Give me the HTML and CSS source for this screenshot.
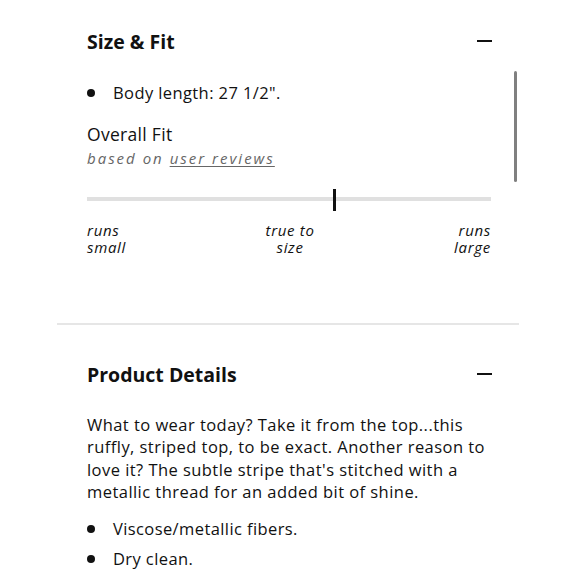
FILE: index.html
```html
<!DOCTYPE html>
<html>
<head>
<meta charset="utf-8">
<link rel="stylesheet" href="styles.css">
</head>
<body>
<div class="panel">
  <section class="section fit">
    <div class="head">
      <h2 class="title">Size &amp; Fit</h2>
      <span class="minus"></span>
    </div>
    <ul class="bullets">
      <li>Body length: 27 1/2".</li>
    </ul>
    <div class="overall">Overall Fit</div>
    <div class="based">based on <span class="link">user reviews</span></div>
    <div class="track"><span class="marker"></span></div>
    <div class="scale">
      <span class="lbl left">runs<br>small</span>
      <span class="lbl mid">true to<br>size</span>
      <span class="lbl right">runs<br>large</span>
    </div>
  </section>
  <section class="section details">
    <div class="head">
      <h2 class="title">Product Details</h2>
      <span class="minus"></span>
    </div>
    <p class="desc">What to wear today? Take it from the top...this ruffly, striped top, to be exact. Another reason to love it? The subtle stripe that's stitched with a metallic thread for an added bit of shine.</p>
    <ul class="bullets list2">
      <li>Viscose/metallic fibers.</li>
      <li>Dry clean.</li>
    </ul>
  </section>
  <span class="scrollbar"></span>
</div>
</body>
</html>
```
FILE: styles.css
```css
html, body {
  margin: 0;
  padding: 0;
  background: #fff;
}
body {
  font-family: "Open Sans", Lato, sans-serif;
  color: #111;
  width: 580px;
  height: 580px;
  overflow: hidden;
}
.panel {
  position: relative;
  margin-left: 57px;
  width: 462px;
}
.section {
  padding: 0 28px 0 30px;
}
.fit {
  padding-top: 27px;
  padding-bottom: 67px;
  border-bottom: 2px solid #e6e6e6;
}
.details {
  padding-top: 35px;
}
.head {
  display: flex;
  justify-content: space-between;
  align-items: center;
  height: 28px;
}
.title {
  margin: 0;
  font-size: 19.5px;
  font-weight: 700;
  color: #111;
}
.minus {
  width: 15px;
  height: 2px;
  background: #111;
  margin-right: -1px;
}
.bullets {
  list-style: none;
  margin: 0;
  padding: 0;
}
.bullets li {
  position: relative;
  padding-left: 26px;
  font-size: 16.5px;
  letter-spacing: 0.4px;
  line-height: 30px;
}
.bullets li::before {
  content: "";
  position: absolute;
  left: 0;
  top: 11px;
  width: 8px;
  height: 8px;
  border-radius: 50%;
  background: #111;
}
.fit .bullets {
  margin-top: 23px;
}
.overall {
  margin-top: 13px;
  font-size: 17.5px;
  letter-spacing: 0.3px;
  line-height: 26px;
}
.based {
  font-size: 15px;
  font-style: italic;
  letter-spacing: 2px;
  color: #666;
  line-height: 22px;
}
.link {
  text-decoration: underline;
  text-underline-offset: 2px;
}
.track {
  position: relative;
  margin-top: 28px;
  height: 4px;
  background: #e0e0e0;
}
.marker {
  position: absolute;
  left: 246px;
  top: -8px;
  width: 3px;
  height: 22px;
  background: #111;
}
.scale {
  display: flex;
  justify-content: space-between;
  margin-top: 21px;
}
.lbl {
  font-size: 15px;
  font-style: italic;
  line-height: 17px;
  letter-spacing: 0.7px;
}
.mid { text-align: center; }
.right { text-align: right; }
.desc {
  margin: 25.75px 0 0;
  font-size: 16.5px;
  letter-spacing: 0.45px;
  line-height: 22.5px;
}
.list2 {
  margin-top: 10px;
}
.scrollbar {
  position: absolute;
  left: 457px;
  top: 71px;
  width: 3px;
  height: 111px;
  border-radius: 2px;
  background: #808080;
}
```
